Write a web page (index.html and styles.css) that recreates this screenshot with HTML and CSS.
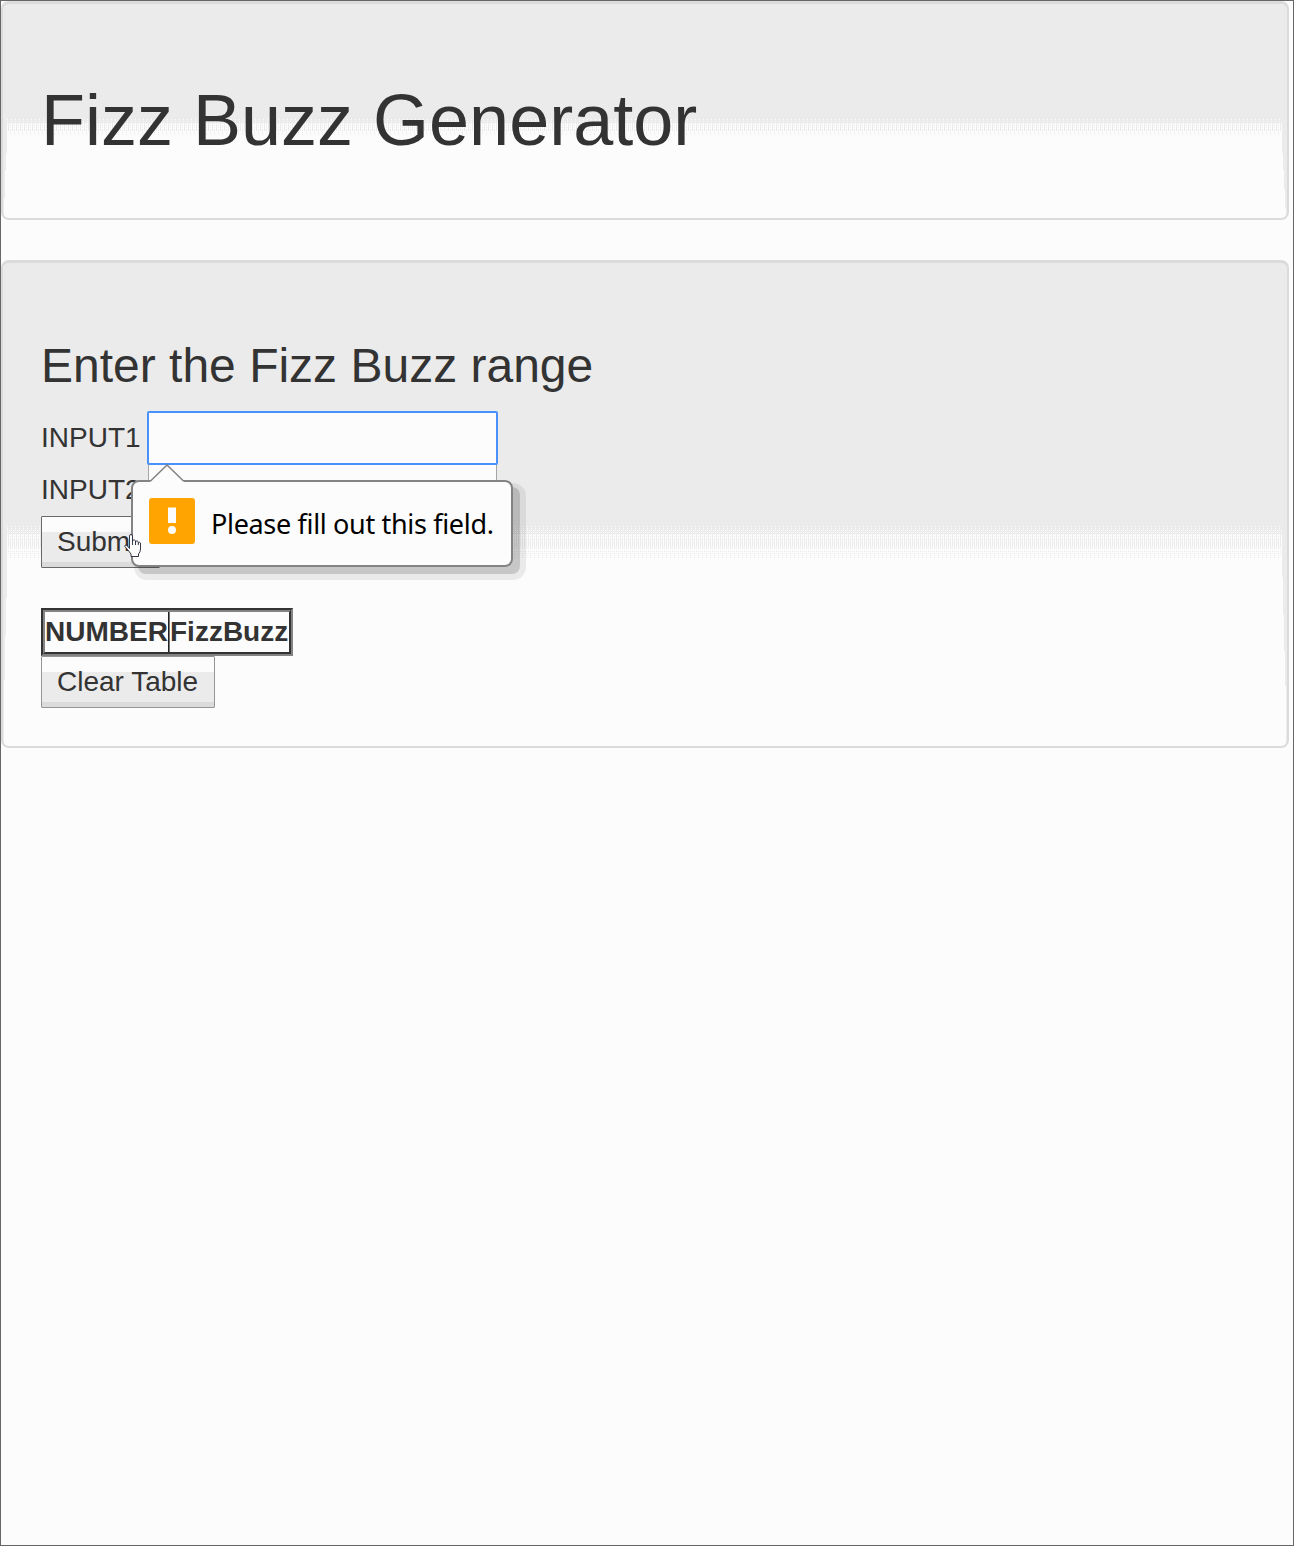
FILE: index.html
```html
<!DOCTYPE html>
<html lang="en">
<head>
<meta charset="utf-8">
<title>Fizz Buzz Generator</title>
<link rel="stylesheet" href="styles.css">
</head>
<body>
<svg class="defs" width="0" height="0" aria-hidden="true">
  <defs>
    <pattern id="fade-short" x="4" y="115" width="4" height="17" patternUnits="userSpaceOnUse">
      <rect y="12" width="4" height="5" fill="#fcfcfc"/>
      <path fill="#fcfcfc" d="M0 0h1v1h-1zM0 2h1v1h-1zM0 4h1v8h-1zM2 4h1v8h-1zM3 5h1v1h-1zM3 7h1v1h-1zM3 9h1v1h-1z"/>
      <path fill="#ebebeb" d="M3 13h1v1h-1zM3 15h1v1h-1z"/>
    </pattern>
    <pattern id="fade-long" x="4" y="263" width="4" height="32" patternUnits="userSpaceOnUse">
      <rect y="20" width="4" height="12" fill="#fcfcfc"/>
      <path fill="#fcfcfc" d="M0 0h1v1h-1zM0 2h1v1h-1zM0 4h1v1h-1zM2 4h1v1h-1zM0 6h1v1h-1zM2 6h1v1h-1zM0 8h1v12h-1zM2 8h1v12h-1zM3 9h1v1h-1zM3 11h1v1h-1z"/>
      <path fill="#ebebeb" d="M1 20h1v1h-1zM3 20h1v3h-1zM1 22h1v1h-1zM1 25h1v1h-1zM3 25h1v1h-1zM1 27h1v1h-1zM3 27h1v1h-1zM3 29h1v1h-1zM3 31h1v1h-1z"/>
    </pattern>
  </defs>
</svg>

<header class="panel panel-title">
  <svg class="backdrop" width="1284" height="214" viewBox="0 0 1284 214" shape-rendering="crispEdges" aria-hidden="true">
    <path fill="#fcfcfc" d="M4 132H1279V140L1281 175L1283 214H1L2 175L4 140Z"/>
    <rect x="4" y="115" width="1275" height="17" fill="url(#fade-short)"/>
  </svg>
  <h1>Fizz Buzz Generator</h1>
</header>

<main class="panel panel-form">
  <svg class="backdrop" width="1284" height="483" viewBox="0 0 1284 483" shape-rendering="crispEdges" aria-hidden="true">
    <path fill="#fcfcfc" d="M4 295H1279L1281 370L1283 440V483H1V440L3 350L4 320Z"/>
    <rect x="4" y="263" width="1275" height="32" fill="url(#fade-long)"/>
  </svg>
  <h2>Enter the Fizz Buzz range</h2>
  <form class="range">
    <label class="row">INPUT1 <input class="field field-active" type="text"></label>
    <label class="row">INPUT2 <input class="field" type="text"></label>
    <button class="button button-submit" type="button">Submit</button>
    <div class="bubble">
      <svg class="bubble-arrow" width="34" height="18" viewBox="0 0 34 18" aria-hidden="true">
        <path d="M0 18L17 1L34 18Z" fill="#fcfcfc"/>
        <path d="M0.500 17L17 1L33.500 17" fill="none" stroke="#838383" stroke-width="1.500"/>
      </svg>
      <svg class="bubble-icon" width="46" height="46" viewBox="0 0 46 46" aria-hidden="true">
        <rect width="46" height="46" rx="3" fill="#ffa400"/>
        <rect x="19" y="9.500" width="8" height="15.500" fill="#fcfcfc"/>
        <circle cx="23" cy="32" r="4" fill="#fcfcfc"/>
      </svg>
      <span class="bubble-text">Please fill out this field.</span>
    </div>
    <svg class="pointer" width="18" height="24" viewBox="0 0 18 24" aria-hidden="true">
      <path d="M5.500 14.500V2Q5.500 .5 7 .5T8.500 2V7Q9 5.500 10.500 6T11.500 8Q12 6.500 13.300 7T14.300 9Q15.500 7.500 16.500 9V15Q16.500 18 14.500 20V22.500H7V20L3.500 15.500L.8 12.500Q.5 11 2 11Q3.500 11.500 5.500 14.500Z" fill="#fcfcfc"/>
      <path d="M5.500 14.500V2Q5.500 .5 7 .5T8.500 2V11M8.500 7Q9 5.500 10.500 6T11.500 8V11M11.500 8Q12 6.500 13.300 7T14.300 9V11M14.300 9Q15.500 7.500 16.500 9V15Q16.500 18 14.500 20V22.500H7V20L3.500 15.500L.8 12.500Q.5 11 2 11Q3.500 11.500 5.500 14.500" fill="none" stroke="#222233" stroke-width=".9"/>
    </svg>
  </form>
  <div class="table-frame">
    <table>
      <tr><th>NUMBER</th><th>FizzBuzz</th></tr>
    </table>
  </div>
  <button class="button button-clear" type="button">Clear Table</button>
</main>
</body>
</html>
```

FILE: styles.css
```css
* { box-sizing: border-box; }

body {
  margin: 0;
  min-height: 1546px;
  border: 1px solid #666;
  background: #fcfcfc;
  color: #333;
  font: 28px/52px "Liberation Sans", Arial, sans-serif;
}

.defs { position: absolute; }

.panel {
  position: relative;
  isolation: isolate;
  width: 1288px;
  padding: 38px;
  border: 2px solid #dbdbdb;
  border-top-width: 3px;
  border-radius: 8px;
  background: #ebebeb;
  overflow: hidden;
}
.panel-title { height: 219px; }
.panel-form { height: 488px; margin-top: 40px; }

.backdrop {
  position: absolute;
  left: 0;
  top: 0;
  z-index: -1;
}

h1, h2 { font-weight: 400; }
h1 { margin: 39px 0 0; font-size: 72px; line-height: 79px; }
h2 { margin: 38px 0 20px; font-size: 48px; line-height: 53px; }

.range {
  position: relative;
  display: flex;
  flex-direction: column;
  align-items: flex-start;
  margin-bottom: 40px;
}
.row { display: flex; height: 52px; justify-content: space-between; width: 456px; }
.field {
  width: 349px;
  height: 52px;
  border: 1px solid #a5a5a5;
  background: #fcfcfc;
  outline: none;
}
.field-active {
  position: relative;
  border-color: #4a90fb;
  border-radius: 1px;
  box-shadow: 0 0 0 1px #4a90fb;
}

.button {
  display: block;
  height: 52px;
  padding: 0 0 0 15px;
  border: 1px solid #959595;
  border-radius: 1px;
  background: linear-gradient(#fcfcfc 15px, #ebebeb 15px 45px, #dbdbdb 45px);
  color: #333;
  font: inherit;
  line-height: 50px;
  text-align: left;
}
.button-submit { width: 119px; border-color: #696969; }
.button-clear { width: 174px; }

.bubble {
  position: absolute;
  left: 90px;
  top: 68px;
  width: 382px;
  height: 87px;
  display: flex;
  align-items: flex-start;
  gap: 17px;
  padding: 16px;
  border: 2px solid #838383;
  border-radius: 8px;
  background: #fcfcfc;
  box-shadow: 7px 7px 0 0 rgba(0, 0, 0, .15), 8px 8px 0 5px rgba(0, 0, 0, .07);
}
.bubble-arrow { position: absolute; left: 17px; top: -18px; }
.bubble-icon { flex: none; }
.bubble-text {
  color: #000;
  font: 27px/46px "Noto Sans", sans-serif;
  letter-spacing: -.33px;
  margin: 3px 0 0 -1px;
  white-space: nowrap;
}
.pointer { position: absolute; left: 83px; top: 122px; }

.table-frame {
  width: 252px;
  border: 2px solid;
  border-color: #333 #838383 #838383 #333;
}
table {
  width: 248px;
  height: 44px;
  border: 2px solid;
  border-color: #838383 #333 #333 #838383;
  border-spacing: 0;
  table-layout: fixed;
  background: #fcfcfc;
}
th { padding: 0; line-height: 38px; text-align: left; white-space: nowrap; }
th:first-child { width: 125px; border-right: 2px groove #777; }
```
